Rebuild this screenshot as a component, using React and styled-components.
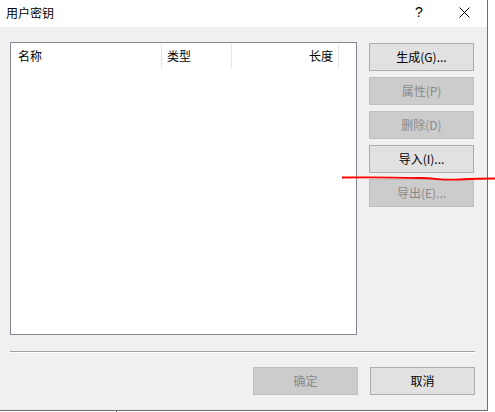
import React from 'react';
import styled, { createGlobalStyle } from 'styled-components';

const GlobalStyle = createGlobalStyle`
  html, body {
    margin: 0;
    padding: 0;
    background: #ffffff;
  }
  body {
    width: 495px;
    height: 412px;
    overflow: hidden;
    position: relative;
    font-family: "Noto Sans CJK SC", "Noto Sans", "Liberation Sans", sans-serif;
    font-size: 12px;
    color: #000;
  }
`;

const Window = styled.div`
  width: 487px;
  height: 410px;
  border-right: 1px solid #6e6e6e;
  border-bottom: 1px solid #6e6e6e;
  display: flex;
  flex-direction: column;
`;

const TitleBar = styled.div`
  height: 27px;
  background: #ffffff;
  display: flex;
  align-items: center;
  padding-left: 6px;
`;

const Title = styled.span`
  flex: 1;
  line-height: 14px;
  margin-top: -2px;
`;

const HelpGlyph = styled.span`
  width: 10px;
  margin-right: 34px;
  font-family: "Liberation Sans", sans-serif;
  font-size: 14px;
  line-height: 14px;
  margin-top: -3px;
`;

const CloseIcon = styled.svg`
  width: 11px;
  height: 11px;
  margin-right: 17px;
  margin-top: -3px;
`;

const Body = styled.div`
  flex: 1;
  background: #f0f0f0;
  padding: 15px 13px 0 10px;
  display: flex;
  flex-direction: column;
`;

const MainRow = styled.div`
  display: flex;
  gap: 12px;
`;

const ListBox = styled.div`
  width: 348px;
  height: 293px;
  box-sizing: border-box;
  background: #ffffff;
  border: 1px solid #828790;
`;

const HeaderRow = styled.div`
  display: flex;
  height: 24px;
  margin-top: 1px;
`;

const HeaderCell = styled.div`
  width: ${p => p.$w}px;
  box-sizing: border-box;
  border-right: 1px solid #e5e5e5;
  display: flex;
  align-items: center;
  justify-content: ${p => (p.$right ? 'flex-end' : 'flex-start')};
  padding: 0 ${p => (p.$right ? '5px' : '0')} 0 ${p => p.$pl || 0}px;
  line-height: 14px;
`;

const ButtonColumn = styled.div`
  display: flex;
  flex-direction: column;
  gap: 6px;
  margin-top: 1px;
`;

const Button = styled.div`
  width: 105px;
  height: 28px;
  box-sizing: border-box;
  display: flex;
  align-items: center;
  justify-content: center;
  line-height: 14px;
  background: ${p => (p.$disabled ? '#cccccc' : '#e1e1e1')};
  border: 1px solid ${p => (p.$disabled ? '#bfbfbf' : '#adadad')};
  color: ${p => (p.$disabled ? '#8a8a8a' : '#000000')};
`;

const Separator = styled.div`
  margin-top: 16px;
  margin-right: -1px;
  height: 1px;
  background: #a0a0a0;
  border-bottom: 1px solid #ffffff;
`;

const FooterRow = styled.div`
  display: flex;
  justify-content: flex-end;
  gap: 12px;
  margin-top: 14px;
  margin-right: -1px;
`;

const BehindStrip = styled.div`
  height: 1px;
  margin-left: 116px;
  width: 1px;
  background: #555555;
`;

const Annotation = styled.svg`
  position: absolute;
  left: 340px;
  top: 172px;
  width: 155px;
  height: 12px;
  pointer-events: none;
`;

const App = () => {
  return (
    <>
      <GlobalStyle />
      <Window>
        <TitleBar>
          <Title>用户密钥</Title>
          <HelpGlyph>?</HelpGlyph>
          <CloseIcon viewBox="0 0 11 11">
            <path d="M0.5 0.5 L10.5 10.5 M10.5 0.5 L0.5 10.5" stroke="#000" strokeWidth="1" fill="none" />
          </CloseIcon>
        </TitleBar>
        <Body>
          <MainRow>
            <ListBox>
              <HeaderRow>
                <HeaderCell $w={151} $pl={7}>名称</HeaderCell>
                <HeaderCell $w={70} $pl={5}>类型</HeaderCell>
                <HeaderCell $w={107} $right>长度</HeaderCell>
              </HeaderRow>
            </ListBox>
            <ButtonColumn>
              <Button>生成(G)...</Button>
              <Button $disabled>属性(P)</Button>
              <Button $disabled>删除(D)</Button>
              <Button>导入(I)...</Button>
              <Button $disabled>导出(E)...</Button>
            </ButtonColumn>
          </MainRow>
          <Separator />
          <FooterRow>
            <Button $disabled>确定</Button>
            <Button>取消</Button>
          </FooterRow>
        </Body>
      </Window>
      <BehindStrip />
      <Annotation viewBox="0 0 155 12">
        <path
          d="M2 5.5 C 30 5, 60 5.5, 80 6 S 100 8.5, 120 7.5 S 145 6.5, 155 6.5"
          stroke="#ff0000"
          strokeWidth="1.8"
          fill="none"
        />
      </Annotation>
    </>
  );
};

export default App;
